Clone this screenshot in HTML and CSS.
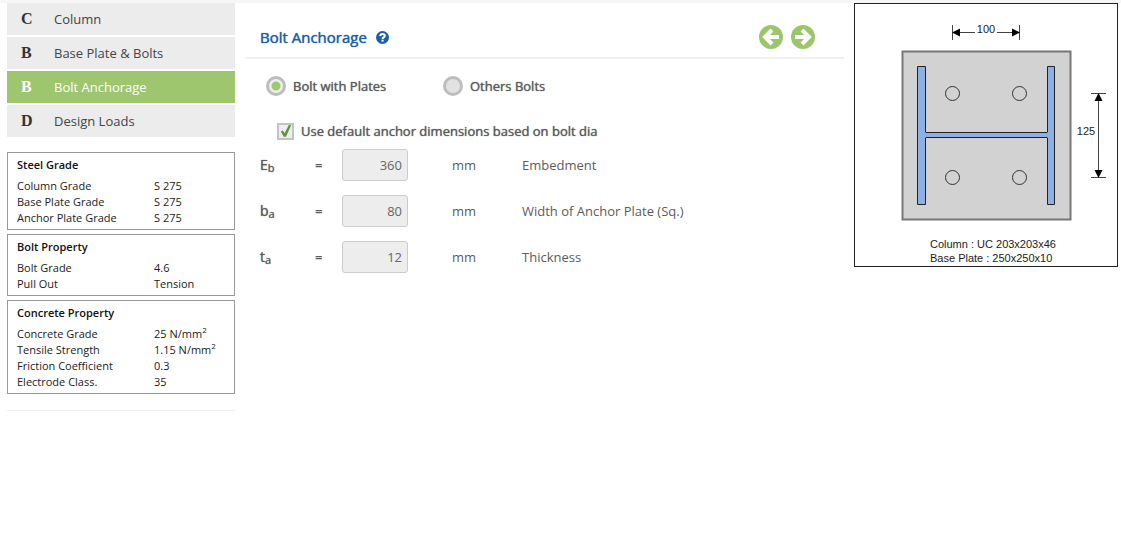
FILE: index.html
```html
<!DOCTYPE html>
<html lang="en">
<head>
<meta charset="utf-8">
<title>Bolt Anchorage</title>
<link rel="stylesheet" href="styles.css">
</head>
<body>
<div class="layout">
  <aside class="sidebar">
    <nav class="menu">
      <a class="menu-item" href="#column"><b class="menu-letter">C</b>Column</a>
      <a class="menu-item" href="#base-plate"><b class="menu-letter">B</b>Base Plate &amp; Bolts</a>
      <a class="menu-item active" href="#anchorage"><b class="menu-letter">B</b>Bolt Anchorage</a>
      <a class="menu-item" href="#loads"><b class="menu-letter">D</b>Design Loads</a>
    </nav>
    <div class="cards">
      <section class="card">
        <h2 class="card-title">Steel Grade</h2>
        <dl class="props">
          <dt>Column Grade</dt><dd>S 275</dd>
          <dt>Base Plate Grade</dt><dd>S 275</dd>
          <dt>Anchor Plate Grade</dt><dd>S 275</dd>
        </dl>
      </section>
      <section class="card">
        <h2 class="card-title">Bolt Property</h2>
        <dl class="props">
          <dt>Bolt Grade</dt><dd>4.6</dd>
          <dt>Pull Out</dt><dd>Tension</dd>
        </dl>
      </section>
      <section class="card">
        <h2 class="card-title">Concrete Property</h2>
        <dl class="props">
          <dt>Concrete Grade</dt><dd>25 N/mm<sup>2</sup></dd>
          <dt>Tensile Strength</dt><dd>1.15 N/mm<sup>2</sup></dd>
          <dt>Friction Coefficient</dt><dd>0.3</dd>
          <dt>Electrode Class.</dt><dd>35</dd>
        </dl>
      </section>
    </div>
  </aside>

  <main class="main">
    <header class="header">
      <h1 class="title">Bolt Anchorage</h1>
      <button class="icon-button" type="button" aria-label="Help">
        <svg width="13" height="13" viewBox="0 0 13 13"><circle cx="6.5" cy="6.5" r="6.5" fill="#1b5fa6"/><path d="M4.2 5.100C4.300 3.500 5.300 2.900 6.500 2.900s2.300.7 2.300 2c0 1.500-2.200 1.500-2.200 3" fill="none" stroke="#fff" stroke-width="2"/><path d="M5.500 8.700h2.100v1.900h-2.100z" fill="#fff"/></svg>
      </button>
      <div class="pager">
        <button class="icon-button" type="button" aria-label="Previous">
          <svg width="24" height="24" viewBox="0 0 24 24"><circle cx="12" cy="12" r="12" fill="#9cc66c"/><path d="M20 12H6M13 5 6 12l7 7" fill="none" stroke="#fff" stroke-width="4"/></svg>
        </button>
        <button class="icon-button" type="button" aria-label="Next">
          <svg width="24" height="24" viewBox="0 0 24 24"><circle cx="12" cy="12" r="12" fill="#9cc66c"/><path d="M4 12h14M11 5l7 7-7 7" fill="none" stroke="#fff" stroke-width="4"/></svg>
        </button>
      </div>
    </header>
    <form class="form">
      <div class="radios">
        <label class="choice"><input class="radio" type="radio" name="type" checked>Bolt with Plates</label>
        <label class="choice"><input class="radio" type="radio" name="type">Others Bolts</label>
      </div>
      <label class="choice default-choice"><input class="check" type="checkbox" checked>Use default anchor dimensions based on bolt dia</label>
      <div class="fields">
        <div class="field">
          <label class="symbol" for="eb">E<sub>b</sub></label><span class="equals">=</span>
          <input class="value" id="eb" type="text" value="360" disabled>
          <span class="unit">mm</span><span>Embedment</span>
        </div>
        <div class="field">
          <label class="symbol" for="ba">b<sub>a</sub></label><span class="equals">=</span>
          <input class="value" id="ba" type="text" value="80" disabled>
          <span class="unit">mm</span><span>Width of Anchor Plate (Sq.)</span>
        </div>
        <div class="field">
          <label class="symbol" for="ta">t<sub>a</sub></label><span class="equals">=</span>
          <input class="value" id="ta" type="text" value="12" disabled>
          <span class="unit">mm</span><span>Thickness</span>
        </div>
      </div>
    </form>
  </main>

  <figure class="diagram">
    <svg class="drawing" viewBox="0 0 262 262" role="img" aria-label="Base plate plan">
      <rect x="47.500" y="47.500" width="168" height="168" fill="#d2d2d2" stroke="#777" stroke-width="2"/>
      <path d="M62.500 62.500h8v66h122v-66h7v138h-7v-67h-122v67h-8z" fill="#8eb0e2" stroke="#222"/>
      <path d="M70.500 128.500v5M192.500 128.500v5" stroke="#8eb0e2"/>
      <g fill="none" stroke="#333">
        <circle cx="97.500" cy="89.500" r="7"/><circle cx="164.500" cy="89.500" r="7"/>
        <circle cx="97.500" cy="173.500" r="7"/><circle cx="164.500" cy="173.500" r="7"/>
      </g>
      <path d="M97.500 21v15M164.500 21v15M98 28.500h22M142 28.500h22M236 89.500h15M236 173.500h15M243.500 90v83" fill="none" stroke="#444"/>
      <path d="M97 28.500l8-4v8zM165 28.500l-8-4v8zM243.500 89l-4 8h8zM243.500 174l-4-8h8z" fill="#000"/>
      <g class="drawing-text">
        <text x="131" y="29" text-anchor="middle">100</text>
        <text x="231" y="131" text-anchor="middle">125</text>
        <text x="75" y="244">Column : UC 203x203x46</text>
        <text x="75" y="258">Base Plate : 250x250x10</text>
      </g>
    </svg>
  </figure>
</div>
</body>
</html>
```
FILE: styles.css
```css
* { box-sizing: border-box; }

body {
  margin: 0;
  border-top: 3px solid #f6f6f6;
  background: #fff;
  color: #5c5c5c;
  font: 13px/18px "Open Sans", sans-serif;
}

h1, h2, dl, dd, figure { margin: 0; }

.layout {
  display: grid;
  grid-template-columns: 228px minmax(0, 1fr) 264px;
  align-items: start;
  gap: 10px;
  padding: 0 3px 0 7px;
}

.menu { display: grid; gap: 2px; }

.menu-item {
  display: flex;
  align-items: center;
  height: 32px;
  padding-left: 14px;
  background: #ececec;
  color: #444;
  text-decoration: none;
}

.menu-letter {
  width: 33px;
  color: #333;
  font: bold 16px/18px "Liberation Serif", serif;
}

.active { background: #9dc66e; color: #fff; }
.active .menu-letter { color: #fff; }

.cards {
  display: grid;
  gap: 4px;
  margin-top: 15px;
  padding-bottom: 16px;
  border-bottom: 1px solid #eee;
}

.card {
  padding: 3px 9px;
  border: 1px solid #999;
  color: #222;
  font-size: 11px;
  line-height: 16px;
}

.card-title {
  margin-bottom: 4px;
  color: #111;
  font-size: 11px;
  font-weight: 600;
  line-height: 18px;
}

.props {
  display: grid;
  grid-template-columns: 137px 1fr;
  grid-auto-rows: 16px;
}

sup, sub { line-height: 0; }
sup { font-size: 8px; }

.header {
  display: flex;
  align-items: center;
  height: 56px;
  padding: 14px 29px 0 15px;
  border-bottom: 2px solid #f1f1f1;
}

/* Slightly emboldened regular weight */
.title, .choice, .symbol { font-weight: 400; text-shadow: 0 0 1px currentColor; }

.title {
  color: #1b5fa6;
  font-size: 15px;
  line-height: 20px;
}

.icon-button {
  display: flex;
  padding: 0;
  border: 0;
  background: none;
}

.title + .icon-button { margin-left: 9px; }

.pager { display: flex; gap: 8px; margin-left: auto; }

.form { padding: 17px 15px; }

.radios { display: grid; grid-template-columns: 177px 1fr; padding-left: 6px; }

.choice {
  display: flex;
  align-items: center;
  gap: 7px;
}

.radio, .check {
  flex: none;
  margin: 0;
  appearance: none;
}

.radio {
  width: 20px;
  height: 20px;
  border: 3px solid #bdbdbd;
  border-radius: 50%;
  background: #e2e2e2;
}

.radio:checked { background: radial-gradient(circle, #9bcb6b 4px, #eee 5px); }

.check {
  width: 17px;
  height: 17px;
  border: 2px solid #c4c4c4;
  background: #eee;
}

.check:checked::before {
  content: "";
  display: block;
  height: 13px;
  background: #5f9440;
  clip-path: polygon(14% 54%, 30% 46%, 43% 68%, 76% 3%, 94% 3%, 54% 94%, 36% 94%);
}

.default-choice { margin: 26px 0 9px 17px; }

.fields { display: grid; gap: 14px; }

.field {
  display: grid;
  grid-template-columns: 55px 27px 66px 44px 70px 1fr;
  align-items: center;
}

.symbol { font-size: 14px; }
.symbol sub { font-size: 11px; vertical-align: -2px; }
.equals { font-weight: 600; }
.unit { grid-column: 5; }

.value {
  width: 66px;
  height: 32px;
  padding: 0 5px;
  border: 1px solid #ccc;
  border-radius: 3px;
  background: #ededed;
  color: #666;
  font: inherit;
  text-align: right;
}

.diagram { border: 1px solid #222; }

.drawing { display: block; width: 100%; }

.drawing-text {
  fill: #222;
  font: 11px "Liberation Sans", sans-serif;
}
```
